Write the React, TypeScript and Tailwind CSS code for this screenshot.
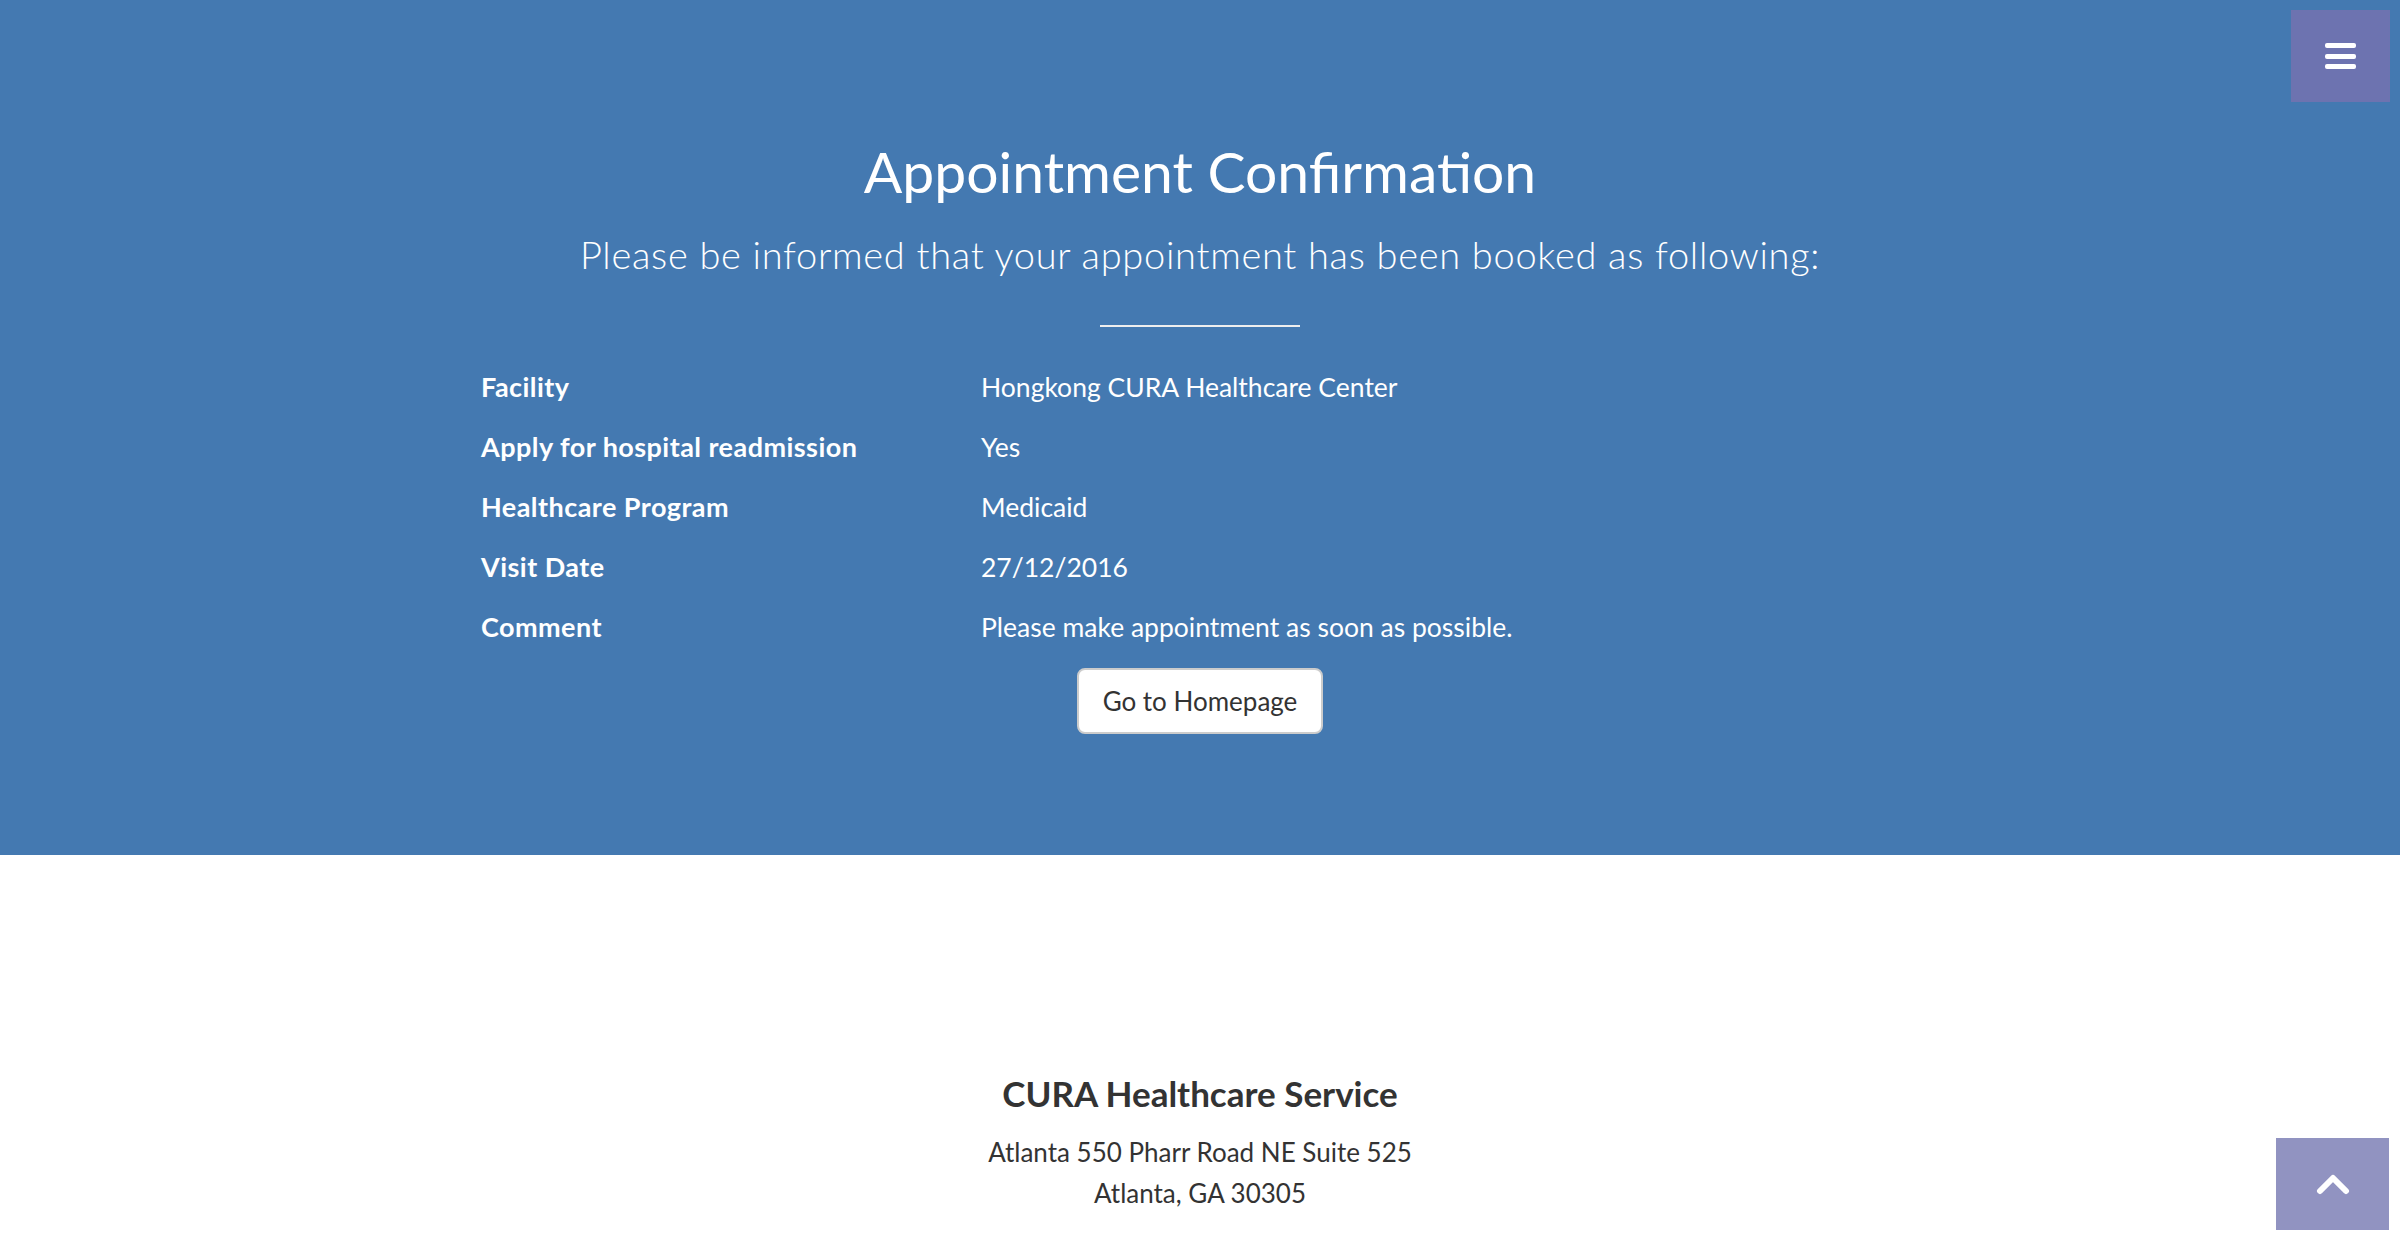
import React from "react";

const rows: [string, string][] = [
  ["Facility", "Hongkong CURA Healthcare Center"],
  ["Apply for hospital readmission", "Yes"],
  ["Healthcare Program", "Medicaid"],
  ["Visit Date", "27/12/2016"],
  ["Comment", "Please make appointment as soon as possible."],
];

export default function App() {
  return (
    <div className="relative h-[1240px] overflow-hidden bg-white font-['Lato',sans-serif]">
      <section className="flex h-[855px] flex-col items-center bg-[#4479b1] text-white">
        <h1 className="mt-[143px] text-[57px] font-normal leading-none">Appointment Confirmation</h1>
        <p className="mt-[35px] text-[38px] font-light leading-none tracking-[0.7px]">
          Please be informed that your appointment has been booked as following:
        </p>
        <hr className="mt-[52px] w-[200px] border-0 border-t-2 border-[#eeeeee]" />
        <div className="mt-[30px] grid w-[1438px] grid-cols-[500px_1fr]">
          {rows.map(([label, value]) => (
            <React.Fragment key={label}>
              <div className="text-[27px] font-bold leading-[60px] tracking-[0.45px]">{label}</div>
              <div className="text-[26.5px] font-normal leading-[60px]">{value}</div>
            </React.Fragment>
          ))}
        </div>
        <button className="mt-[11px] flex h-[66px] w-[246px] items-center justify-center rounded-[8px] border-2 border-[#cccccc] bg-white text-[26px] leading-none text-[#333333]">
          Go to Homepage
        </button>
      </section>

      <footer className="flex flex-col items-center text-[#333333]">
        <h4 className="mt-[221px] text-[35px] font-bold leading-none">CURA Healthcare Service</h4>
        <p className="mt-[21px] text-center text-[26px] leading-[41px]">
          Atlanta 550 Pharr Road NE Suite 525
          <br />
          Atlanta, GA 30305
        </p>
      </footer>

      <button className="absolute right-[10px] top-[10px] flex h-[92px] w-[99px] flex-col items-center justify-center gap-[5.5px] bg-[#6d73b0]">
        <span className="block h-[5px] w-[31px] rounded-[2px] bg-white" />
        <span className="block h-[5px] w-[31px] rounded-[2px] bg-white" />
        <span className="block h-[5px] w-[31px] rounded-[2px] bg-white" />
      </button>

      <a className="absolute bottom-[10px] right-[11px] flex h-[92px] w-[113px] items-center justify-center bg-[#9193c1]">
        <svg width="34" height="22" viewBox="0 0 34 22" fill="none">
          <polyline
            points="4,18 17,5 30,18"
            stroke="white"
            strokeWidth="6"
            strokeLinecap="round"
            strokeLinejoin="round"
          />
        </svg>
      </a>
    </div>
  );
}
